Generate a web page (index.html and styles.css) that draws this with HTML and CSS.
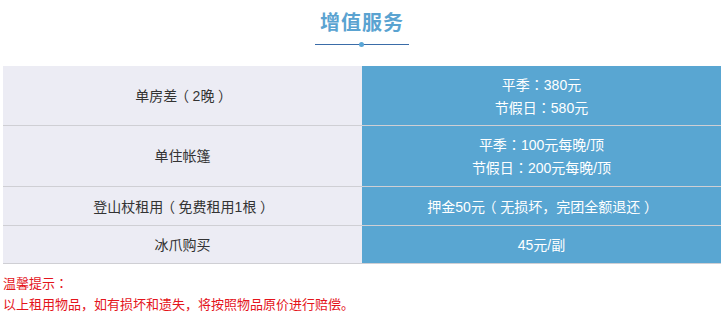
FILE: index.html
```html
<!DOCTYPE html>
<html lang="zh-CN">
<head>
<meta charset="utf-8">
<title>增值服务</title>
<link rel="stylesheet" href="styles.css">
</head>
<body>
<section class="services">
  <header class="services-head">
    <h2 class="services-title">增值服务</h2>
    <div class="services-rule"><span class="services-dot"></span></div>
  </header>
  <table class="price-table">
    <tr class="row-a">
      <td class="item">单房差<span class="fw bracket" lang="ja">（</span>2晚<span class="fw bracket" lang="ja">）</span></td>
      <td class="price">平季<span class="fw" lang="ja">：</span>380元<br>节假日<span class="fw" lang="ja">：</span>580元</td>
    </tr>
    <tr class="row-b">
      <td class="item">单住帐篷</td>
      <td class="price">平季<span class="fw" lang="ja">：</span>100元每晚/顶<br>节假日<span class="fw" lang="ja">：</span>200元每晚/顶</td>
    </tr>
    <tr class="row-c">
      <td class="item">登山杖租用<span class="fw bracket" lang="ja">（</span>免费租用1根<span class="fw bracket" lang="ja">）</span></td>
      <td class="price">押金50元<span class="fw bracket" lang="ja">（</span>无损坏<span class="fw" lang="ja">，</span>完团全额退还<span class="fw bracket" lang="ja">）</span></td>
    </tr>
    <tr class="row-d">
      <td class="item">冰爪购买</td>
      <td class="price">45元/副</td>
    </tr>
  </table>
  <div class="notice">
    <p>温馨提示<span class="fw" lang="ja">：</span></p>
    <p>以上租用物品<span class="fw" lang="ja">，</span>如有损坏和遗失<span class="fw" lang="ja">，</span>将按照物品原价进行赔偿。</p>
  </div>
</section>
</body>
</html>
```
FILE: styles.css
```css
html, body {
  margin: 0;
  padding: 0;
  background: #ffffff;
}

body {
  font-family: "Liberation Sans", Arial, "Noto Sans CJK SC", sans-serif;
  padding: 0 3px;
}

/* full-width punctuation sits centred in its em box */
.fw {
  font-family: "Noto Sans CJK JP", "Noto Sans CJK SC", sans-serif;
}

/* brackets: tight glyph, padded back out to a centred full-width cell */
.fw.bracket {
  font-feature-settings: "palt" 1;
  padding: 0 0.3em;
}

.services-head {
  display: flex;
  flex-direction: column;
  align-items: center;
  padding-top: 9px;
}

.services-title {
  margin: 0;
  font-size: 20px;
  line-height: 28px;
  font-weight: bold;
  color: #5aa3d1;
  letter-spacing: 1px;
}

.services-rule {
  position: relative;
  width: 94px;
  height: 1px;
  margin-top: 7px;
  background: #3a6ca8;
}

.services-dot {
  position: absolute;
  left: 44px;
  top: -2px;
  width: 5px;
  height: 5px;
  border-radius: 50%;
  background: #5aa6d6;
}

.price-table {
  width: 718px;
  margin-top: 21px;
  border-collapse: collapse;
  table-layout: fixed;
  font-size: 14px;
  line-height: 22px;
}

.price-table td {
  width: 50%;
  text-align: center;
  vertical-align: middle;
  padding: 0;
  border-bottom: 1px solid #cfcfd4;
}

.row-a td { height: 59px; }
.row-b td { height: 60px; }
.row-c td { height: 38px; }
.row-d td { height: 37px; }

.item {
  background: #ececf4;
  color: #333333;
}

.price {
  background: #59a6d2;
  color: #ffffff;
}

.notice {
  margin-top: 9px;
  font-size: 13px;
  line-height: 20px;
  color: #e4141b;
}

.notice p {
  margin: 0;
}
```
